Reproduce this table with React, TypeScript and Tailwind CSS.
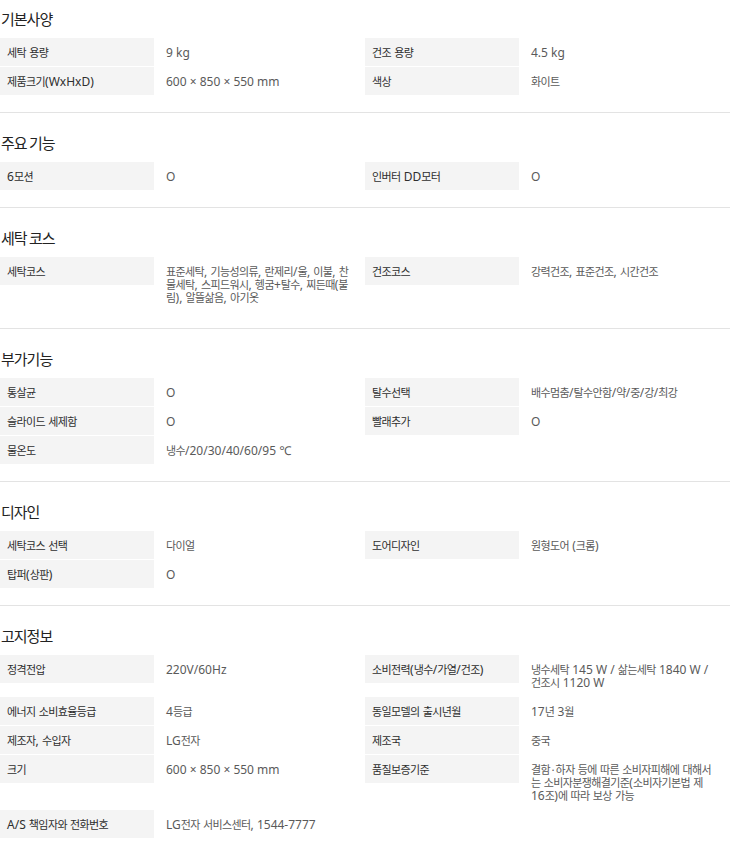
import React from "react";

type Item = { label: string; value: string[] };
type Section = { title: string; items: (Item | null)[] };

const sections: Section[] = [
  {
    title: "기본사양",
    items: [
      { label: "세탁 용량", value: ["9 kg"] },
      { label: "건조 용량", value: ["4.5 kg"] },
      { label: "제품크기(WxHxD)", value: ["600 × 850 × 550 mm"] },
      { label: "색상", value: ["화이트"] },
    ],
  },
  {
    title: "주요 기능",
    items: [
      { label: "6모션", value: ["O"] },
      { label: "인버터 DD모터", value: ["O"] },
    ],
  },
  {
    title: "세탁 코스",
    items: [
      {
        label: "세탁코스",
        value: [
          "표준세탁, 기능성의류, 란제리/울, 이불, 찬",
          "물세탁, 스피드워시, 헹굼+탈수, 찌든때(불",
          "림), 알뜰삶음, 아기옷",
        ],
      },
      { label: "건조코스", value: ["강력건조, 표준건조, 시간건조"] },
    ],
  },
  {
    title: "부가기능",
    items: [
      { label: "통살균", value: ["O"] },
      { label: "탈수선택", value: ["배수멈춤/탈수안함/약/중/강/최강"] },
      { label: "슬라이드 세제함", value: ["O"] },
      { label: "빨래추가", value: ["O"] },
      { label: "물온도", value: ["냉수/20/30/40/60/95 ℃"] },
      null,
    ],
  },
  {
    title: "디자인",
    items: [
      { label: "세탁코스 선택", value: ["다이얼"] },
      { label: "도어디자인", value: ["원형도어 (크롬)"] },
      { label: "탑퍼(상판)", value: ["O"] },
      null,
    ],
  },
  {
    title: "고지정보",
    items: [
      { label: "정격전압", value: ["220V/60Hz"] },
      {
        label: "소비전력(냉수/가열/건조)",
        value: ["냉수세탁 145 W / 삶는세탁 1840 W /", "건조시 1120 W"],
      },
      { label: "에너지 소비효율등급", value: ["4등급"] },
      { label: "동일모델의 출시년월", value: ["17년 3월"] },
      { label: "제조자, 수입자", value: ["LG전자"] },
      { label: "제조국", value: ["중국"] },
      { label: "크기", value: ["600 × 850 × 550 mm"] },
      {
        label: "품질보증기준",
        value: [
          "결함·하자 등에 따른 소비자피해에 대해서",
          "는 소비자분쟁해결기준(소비자기본법 제",
          "16조)에 따라 보상 가능",
        ],
      },
      { label: "A/S 책임자와 전화번호", value: ["LG전자 서비스센터, 1544-7777"] },
      null,
    ],
  },
];

const HANGUL_SPLIT = /([\u1100-\u11FF\u3130-\u318F\uAC00-\uD7AF·]+)/;
const HANGUL_TEST = /^[\u1100-\u11FF\u3130-\u318F\uAC00-\uD7AF·]+$/;

function Txt({ s }: { s: string }) {
  const parts = s.split(HANGUL_SPLIT).filter((p) => p.length > 0);
  return (
    <>
      {parts.map((p, i) =>
        HANGUL_TEST.test(p) ? (
          <span
            key={i}
            className="font-['Noto_Sans_CJK_KR',sans-serif] text-[11px] tracking-[-0.6px] leading-[10px]"
          >
            {p}
          </span>
        ) : (
          <span key={i} className="text-[12px] leading-[10px]">
            {p}
          </span>
        )
      )}
    </>
  );
}

function Cell({ item }: { item: Item | null }) {
  if (!item) return <div />;
  return (
    <div className="flex items-start">
      <div className="w-[154px] h-[28px] shrink-0 bg-[#f4f4f4] pl-[7px] flex items-center text-[#2e2e2e] whitespace-nowrap leading-[13px]">
        <span>
          <Txt s={item.label} />
        </span>
      </div>
      <div className="flex-1 pl-[12px] pt-[8px] pb-[7px] text-[#5a5a5a]">
        {item.value.map((line, i) => (
          <div
            key={i}
            className="whitespace-nowrap h-[13px] leading-[13px] overflow-visible"
          >
            <Txt s={line} />
          </div>
        ))}
      </div>
    </div>
  );
}

export default function App() {
  return (
    <div className="w-full bg-white font-['Noto_Sans','Noto_Sans_CJK_KR',sans-serif] text-[12px]">
      {sections.map((sec, si) => (
        <section
          key={si}
          className={
            si === 0
              ? "pb-[17px]"
              : "border-t border-[#e3e3e3] pt-[11px] pb-[17px]"
          }
        >
          <h2 className="h-[38px] flex items-center pl-[1px] pt-[1px] font-['Noto_Sans_CJK_KR',sans-serif] text-[15px] tracking-[-1px] text-[#222] font-normal">
            {sec.title}
          </h2>
          <div className="grid grid-cols-2 gap-y-px">
            {sec.items.map((it, ii) => (
              <Cell key={ii} item={it} />
            ))}
          </div>
        </section>
      ))}
    </div>
  );
}
